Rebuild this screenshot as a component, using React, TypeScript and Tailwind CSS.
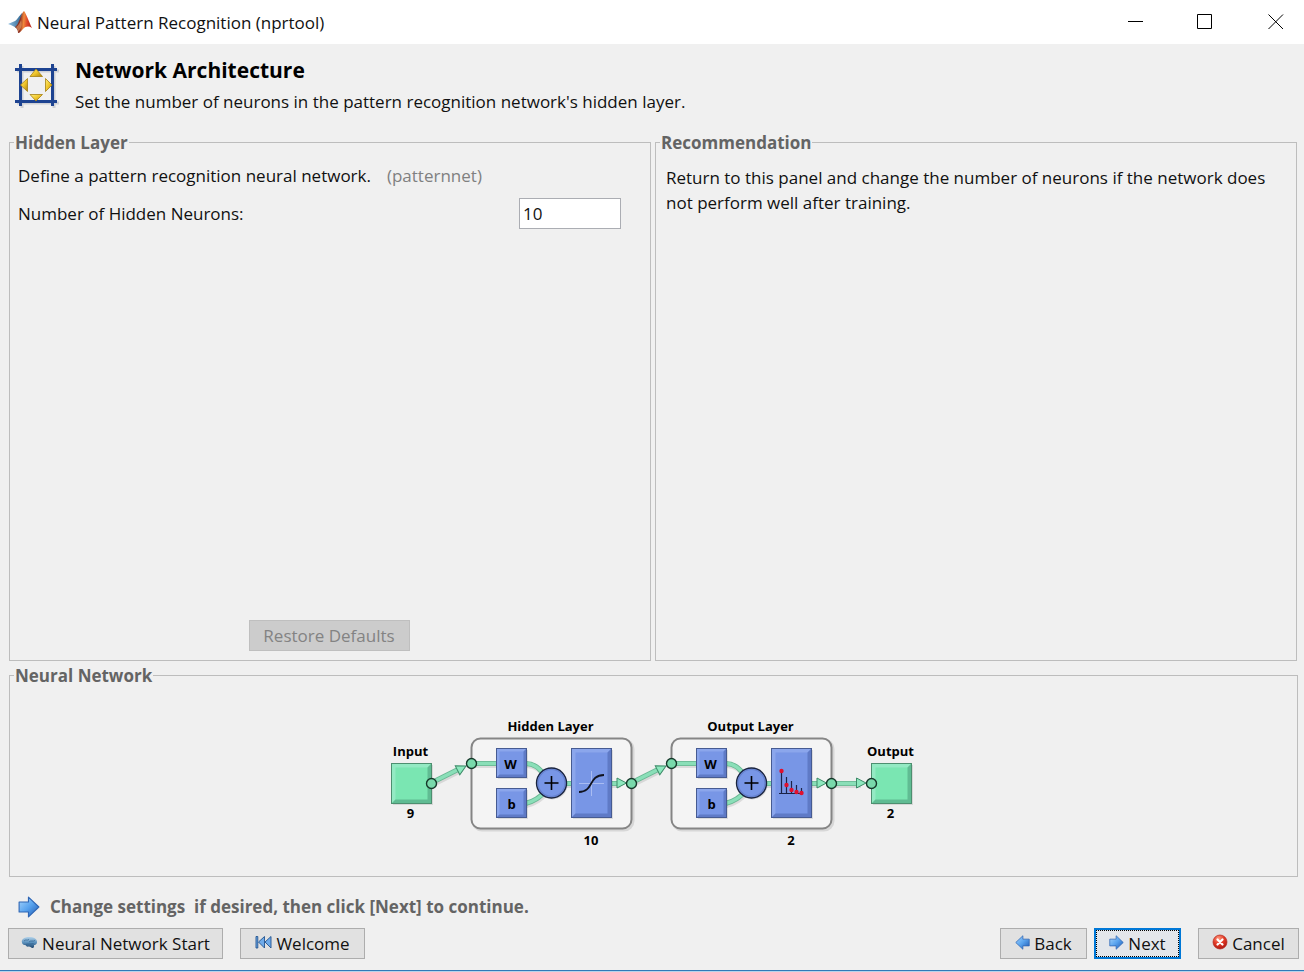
import { useState, type ReactNode } from "react";

function MatlabIcon() {
  return (
    <svg width="24" height="24" viewBox="0 0 24 24" aria-hidden="true">
      <defs>
        <linearGradient id="mOrange" x1="0" y1="0" x2="1" y2="0.1">
          <stop offset="0" stopColor="#7a3a2c" />
          <stop offset="0.35" stopColor="#8e2f22" />
          <stop offset="0.55" stopColor="#f08a3c" />
          <stop offset="0.75" stopColor="#e0482a" />
          <stop offset="1" stopColor="#b5281c" />
        </linearGradient>
        <linearGradient id="mBlue" x1="0" y1="0" x2="1" y2="0">
          <stop offset="0" stopColor="#8dbde0" />
          <stop offset="1" stopColor="#2f6590" />
        </linearGradient>
      </defs>
      <path d="M0 14 L7 11 C9 10 11 6 14 3 L13 13 L8 18 C6 16 3 15 0 14Z" fill="url(#mBlue)" />
      <path d="M16 1 C18 3 21 12 24 18 C21 16 18 16 15 19 C13 21 12 23 10 23 C10 20 9 19 7 17 C11 15 13 3 16 1Z" fill="url(#mOrange)" />
      <path d="M8 17C10 16 12 13 13 10C14 14 14 18 10 22C10 20 9 18 8 17Z" fill="#f9b878" opacity="0.5" />
    </svg>
  );
}

function ArchitectureIcon() {
  return (
    <svg width="45" height="46" viewBox="0 0 45 46" aria-hidden="true">
      <defs>
        <linearGradient id="gold" x1="0" y1="0" x2="1" y2="1">
          <stop offset="0" stopColor="#fff07a" />
          <stop offset="0.5" stopColor="#f0c62c" />
          <stop offset="1" stopColor="#a9820c" />
        </linearGradient>
      </defs>
      <g stroke="#b9bcc4" strokeWidth="3" opacity="0.6">
        <path d="M3 9H45M3 41H45M8 4V46M40 4V46" />
      </g>
      <g stroke="#1d4391" strokeWidth="3">
        <path d="M1 7.500H43M1 39.500H43M6.500 2V44M38.500 2V44" />
      </g>
      <g fill="url(#gold)" stroke="#a68012" strokeWidth="0.8" strokeLinejoin="round">
        <path d="M22 7L28.500 14.500H16Z" />
        <path d="M22 39L28.500 32.500H16Z" />
        <path d="M6.500 23L13.500 16.500V29.500Z" />
        <path d="M38 23L31.500 16.500V29.500Z" />
      </g>
    </svg>
  );
}

function ArrowIcon({ size, left = false }: { size: number; left?: boolean }) {
  return (
    <svg width={size} height={size} viewBox="0 0 20 20" aria-hidden="true" className="shrink-0">
      <defs>
        <linearGradient id="arrowBlue" x1="0" y1="0" x2="1" y2="1">
          <stop offset="0" stopColor="#a9d6fc" />
          <stop offset="0.5" stopColor="#58a3ee" />
          <stop offset="1" stopColor="#1c56b0" />
        </linearGradient>
      </defs>
      <path
        d={left ? "M19 5.500H10.500V1L1 10L10.500 19V14.500H19Z" : "M1 5.500H9.500V1L19 10L9.500 19V14.500H1Z"}
        fill="url(#arrowBlue)"
        stroke="#2f66b4"
        strokeWidth="1"
        strokeLinejoin="round"
      />
    </svg>
  );
}

function BrainIcon() {
  return (
    <svg width="17" height="16" viewBox="0 0 17 16" aria-hidden="true">
      <defs>
        <linearGradient id="brain" x1="0" y1="0" x2="0" y2="1">
          <stop offset="0" stopColor="#b4d3ea" />
          <stop offset="0.5" stopColor="#5a90bc" />
          <stop offset="1" stopColor="#1f466e" />
        </linearGradient>
      </defs>
      <path d="M1 8.500C0 5.500 3 3 8 3C13 3 16.500 5 16 8.500C15.800 10.500 14 11 13 11C13.500 13 12.500 14.500 11 14C10 13.500 9 12.500 8 12.500C6 13 4.500 12 4.500 11C2.500 11 1.300 10.500 1 8.500Z" fill="url(#brain)" />
      <path d="M3 7C5 5 6 7 8 5.500M8 8C10 6 12 8 14 6.500M4.500 10.500C7 9.500 9 10.500 12.500 9.500" stroke="#2e628f" strokeWidth="0.7" fill="none" />
    </svg>
  );
}

function RewindIcon() {
  return (
    <svg width="17" height="16" viewBox="0 0 17 16" aria-hidden="true">
      <g fill="#6fabea" stroke="#22548f" strokeWidth="0.9" strokeLinejoin="round">
        <path d="M1 2.500H2.800V14H1Z" />
        <path d="M9.500 2.500V14L3.500 8Z" />
        <path d="M16 2.500V14L10 8Z" />
      </g>
    </svg>
  );
}

function CancelIcon() {
  return (
    <svg width="16" height="16" viewBox="0 0 16 16" aria-hidden="true">
      <defs>
        <radialGradient id="cancelRed" cx="0.4" cy="0.25" r="0.8">
          <stop offset="0" stopColor="#ff9a80" />
          <stop offset="0.5" stopColor="#e23a26" />
          <stop offset="1" stopColor="#a81510" />
        </radialGradient>
      </defs>
      <circle cx="8" cy="8" r="7" fill="url(#cancelRed)" stroke="#b3261c" strokeWidth="0.7" />
      <path d="M5.500 5.500L10.500 10.500M10.500 5.500L5.500 10.500" stroke="#fff" strokeWidth="2.200" strokeLinecap="round" />
    </svg>
  );
}

function Bevel({ x, y, w, h, d, green = false }: { x: number; y: number; w: number; h: number; d: number; green?: boolean }) {
  const c = green
    ? { face: "#7ae6b2", light: "#9cebc8", dark: "#5cb48d", edge: "#4d8f70" }
    : { face: "#7896e6", light: "#92abee", dark: "#5a75c0", edge: "#465b92" };
  const r = x + w;
  const b = y + h;
  return (
    <g>
      <rect x={x + 1.5} y={y + 1.5} width={w} height={h} fill="#000" opacity="0.1" />
      <rect x={x} y={y} width={w} height={h} fill={c.face} />
      <path d={`M${x} ${y}H${r}L${r - d} ${y + d}H${x + d}V${b - d}L${x} ${b}Z`} fill={c.light} opacity="0.75" />
      <path d={`M${r} ${b}H${x}L${x + d} ${b - d}H${r - d}V${y + d}L${r} ${y}Z`} fill={c.dark} opacity="0.85" />
      <rect x={x} y={y} width={w} height={h} fill="none" stroke={c.edge} strokeWidth="1" />
    </g>
  );
}

function Wire({ d }: { d: string }) {
  return (
    <g fill="none">
      <path d={d} stroke="#000" strokeOpacity="0.1" strokeWidth="5" transform="translate(1 2)" />
      <path d={d} stroke="#68b692" strokeWidth="5" />
      <path d={d} stroke="#8adfb8" strokeWidth="3.400" />
    </g>
  );
}

function Port({ x, y }: { x: number; y: number }) {
  return <circle cx={x} cy={y} r="5" fill="#79d9ab" stroke="#16382a" strokeWidth="1.400" />;
}

function Arrowhead({ x, y, angle = 0 }: { x: number; y: number; angle?: number }) {
  return (
    <path
      d="M0 0L-9.500 -5V5Z"
      transform={`translate(${x} ${y}) rotate(${angle})`}
      fill="#8ce8bd"
      stroke="#3d8a68"
      strokeWidth="1"
    />
  );
}

function Layer({ x, title, size, children }: { x: number; title: string; size: string; children: ReactNode }) {
  return (
    <g>
      <rect x={x + 1.5} y="740" width="160" height="90" rx="9" fill="none" stroke="#000" strokeOpacity="0.1" strokeWidth="3" />
      <rect x={x} y="738.500" width="160" height="90" rx="9" fill="#f4f4f4" stroke="#858585" strokeWidth="2" />
      <text x={x + 79} y="731">{title}</text>
      <text x={x + 119.5} y="845">{size}</text>
      <Wire d={`M${x} 763.500H${x + 26}`} />
      <Wire d={`M${x + 54} 763.500C${x + 64} 763.500 ${x + 68} 769 ${x + 76} 778`} />
      <Wire d={`M${x + 54} 803.500C${x + 64} 801 ${x + 68} 797 ${x + 76} 790`} />
      <Wire d={`M${x + 90} 783.500H${x + 102}M${x + 138} 783.500H${x + 148}`} />
      <Bevel x={x + 25} y={748.5} w={30} h={29} d={3} />
      <Bevel x={x + 25} y={788.5} w={30} h={29} d={3} />
      <text x={x + 39} y="769">W</text>
      <text x={x + 40} y="809">b</text>
      <circle cx={x + 81} cy="784.500" r="15" fill="#000" opacity="0.12" />
      <circle cx={x + 80} cy="783" r="15" fill="#7896e6" stroke="#1a2440" strokeWidth="1.400" />
      <circle cx={x + 80} cy="783" r="13.500" fill="none" stroke="#5a75c0" strokeWidth="1.200" opacity="0.6" />
      <path d={`M${x + 73} 783H${x + 87}M${x + 80} 776V790`} stroke="#000" strokeWidth="1.600" />
      <Bevel x={x + 100} y={748.5} w={40} h={69} d={4} />
      {children}
      <Arrowhead x={x + 155} y={783} />
    </g>
  );
}

function NetworkDiagram() {
  const stems = [[781, 771], [786, 785], [791, 790], [796, 792], [801, 793]];
  return (
    <svg
      width="540"
      height="150"
      viewBox="380 710 540 150"
      role="img"
      aria-label="Neural network diagram"
      className="font-['Open_Sans'] text-[13px] font-bold"
      textAnchor="middle"
    >
      <Layer x={471.5} title="Hidden Layer" size="10">
        <path d="M579 783.500H604M591.500 771V796" stroke="#a9bcf2" strokeWidth="1" />
        <path d="M579 792C594 792 588 775 604 775" fill="none" stroke="#10131f" strokeWidth="1.800" />
      </Layer>
      <Layer x={671.5} title="Output Layer" size="2">
        <path d="M779 793.500H803M781.500 771V793M786.500 777V793M791.500 781V793M796.500 785V793M801.500 788V793" stroke="#1b2347" strokeWidth="1.200" />
        {stems.map(([cx, cy]) => (
          <circle key={cx} cx={cx + 0.5} cy={cy} r="2.200" fill="#e0102e" />
        ))}
      </Layer>
      <text x="410.500" y="756">Input</text>
      <text x="410.500" y="818">9</text>
      <text x="890.500" y="756">Output</text>
      <text x="890.500" y="818">2</text>
      <Bevel x={391.5} y={763.5} w={40} h={40} d={4} green />
      <Bevel x={871.5} y={763.5} w={40} h={40} d={4} green />
      <Wire d="M431 783L460 768.500" />
      <Wire d="M631 783L660 768.500" />
      <Wire d="M831 783.500H860" />
      <Arrowhead x={466} y={766} angle={-27} />
      <Arrowhead x={666} y={766} angle={-27} />
      <Arrowhead x={866} y={783} />
      <Port x={431.5} y={783.5} />
      <Port x={471.5} y={763.5} />
      <Port x={631.5} y={783.5} />
      <Port x={671.5} y={763.5} />
      <Port x={831.5} y={783.5} />
      <Port x={871.5} y={783.5} />
    </svg>
  );
}

function GroupBox({ title, className = "", children }: { title: string; className?: string; children: ReactNode }) {
  return (
    <fieldset className={`min-w-0 border border-[#bdbdbd] ${className}`}>
      <legend className="ml-1 px-px pt-[2px] text-[17px] leading-[22px] font-bold text-[#646464]">{title}</legend>
      {children}
    </fieldset>
  );
}

function PushButton({ className, icon, children }: { className: string; icon: ReactNode; children: ReactNode }) {
  return (
    <button
      type="button"
      className={`flex h-[31px] items-center justify-center gap-1 text-[17px] whitespace-nowrap ${className}`}
    >
      <span className="mb-[3px]">{icon}</span>
      {children}
    </button>
  );
}

export default function App() {
  const [neurons, setNeurons] = useState("10");

  return (
    <div className="flex min-h-screen flex-col bg-[#f0f0f0] font-['Open_Sans','Noto_Sans',sans-serif] text-[17px] leading-[25px] text-[#111]">
      <header className="flex h-11 items-center bg-white pl-2">
        <MatlabIcon />
        <span className="ml-[5px] flex-1">Neural Pattern Recognition (nprtool)</span>
        <button type="button" aria-label="Minimize" className="flex h-11 w-[70px] items-center justify-center">
          <svg width="16" height="16" viewBox="0 0 16 16" stroke="#000"><path d="M1 7.500H16" /></svg>
        </button>
        <button type="button" aria-label="Maximize" className="flex h-11 w-[70px] items-center justify-center">
          <svg width="16" height="16" viewBox="0 0 16 16" stroke="#000" fill="none"><path d="M0.500 0.500H14.500V14.500H0.500Z" /></svg>
        </button>
        <button type="button" aria-label="Close" className="flex h-11 w-16 items-center justify-center pl-2">
          <svg width="16" height="16" viewBox="0 0 16 16" stroke="#000"><path d="M0.500 0.500L15 15M15 0.500L0.500 15" /></svg>
        </button>
      </header>

      <main className="flex flex-1 flex-col">
        <div className="flex items-center gap-4 pt-3 pb-4 pl-[14px]">
          <ArchitectureIcon />
          <div>
            <h1 className="text-[21px] leading-7 font-bold text-black">Network Architecture</h1>
            <p className="mt-[6px] leading-6">Set the number of neurons in the pattern recognition network's hidden layer.</p>
          </div>
        </div>

        <div className="grid flex-1 grid-cols-2 gap-1 pr-[7px] pl-[9px]">
          <GroupBox title="Hidden Layer">
            <div className="flex h-full flex-col pt-[9px] pr-[10px] pl-2">
              <p>
                Define a pattern recognition neural network.
                <span className="ml-4 text-[#808080]">(patternnet)</span>
              </p>
              <div className="mt-[10px] flex items-center justify-between pr-[19px]">
                <label htmlFor="neurons">Number of Hidden Neurons:</label>
                <input
                  id="neurons"
                  type="text"
                  value={neurons}
                  onChange={(e) => setNeurons(e.target.value)}
                  className="h-[31px] w-[102px] border border-[#abadb3] bg-white px-[3px]"
                />
              </div>
              <button type="button" disabled className="mx-auto mt-auto mb-[9px] h-[31px] w-[161px] border border-[#bfbfbf] bg-[#cccccc] text-[#838383]">
                Restore Defaults
              </button>
            </div>
          </GroupBox>
          <GroupBox title="Recommendation">
            <p className="px-[10px] pt-[11px]">
              Return to this panel and change the number of neurons if the network does not perform well after training.
            </p>
          </GroupBox>
        </div>

        <div className="mt-[2px] pr-[6px] pl-[9px]">
          <GroupBox title="Neural Network">
            <div className="flex justify-center pt-[23px] pr-2 pb-4">
              <NetworkDiagram />
            </div>
          </GroupBox>
        </div>

        <div className="flex items-center gap-[10px] pt-[17px] pb-[9px] pl-[18px] font-bold text-[#646464]">
          <ArrowIcon size={22} />
          <p className="whitespace-pre">{"Change settings  if desired, then click [Next] to continue."}</p>
        </div>

        <div className="flex pr-[5px] pb-[11px] pl-2">
          <PushButton icon={<BrainIcon />} className="w-[215px] border border-[#adadad] bg-[#e1e1e1]">Neural Network Start</PushButton>
          <PushButton icon={<RewindIcon />} className="ml-[17px] w-[125px] border border-[#adadad] bg-[#e1e1e1]">Welcome</PushButton>
          <PushButton icon={<ArrowIcon size={15} left />} className="ml-auto w-[87px] border border-[#adadad] bg-[#e1e1e1]">Back</PushButton>
          <PushButton icon={<ArrowIcon size={15} />} className="ml-[7px] w-[87px] border-2 border-[#0078d7] bg-[#e3e6eb] outline-1 -outline-offset-3 outline-dotted outline-black">Next</PushButton>
          <PushButton icon={<CancelIcon />} className="ml-[17px] w-[101px] border border-[#adadad] bg-[#e1e1e1]">Cancel</PushButton>
        </div>
      </main>
      <footer className="h-[2px] border-t border-[#2f7ab8] bg-[#b5d3ea]" />
    </div>
  );
}
